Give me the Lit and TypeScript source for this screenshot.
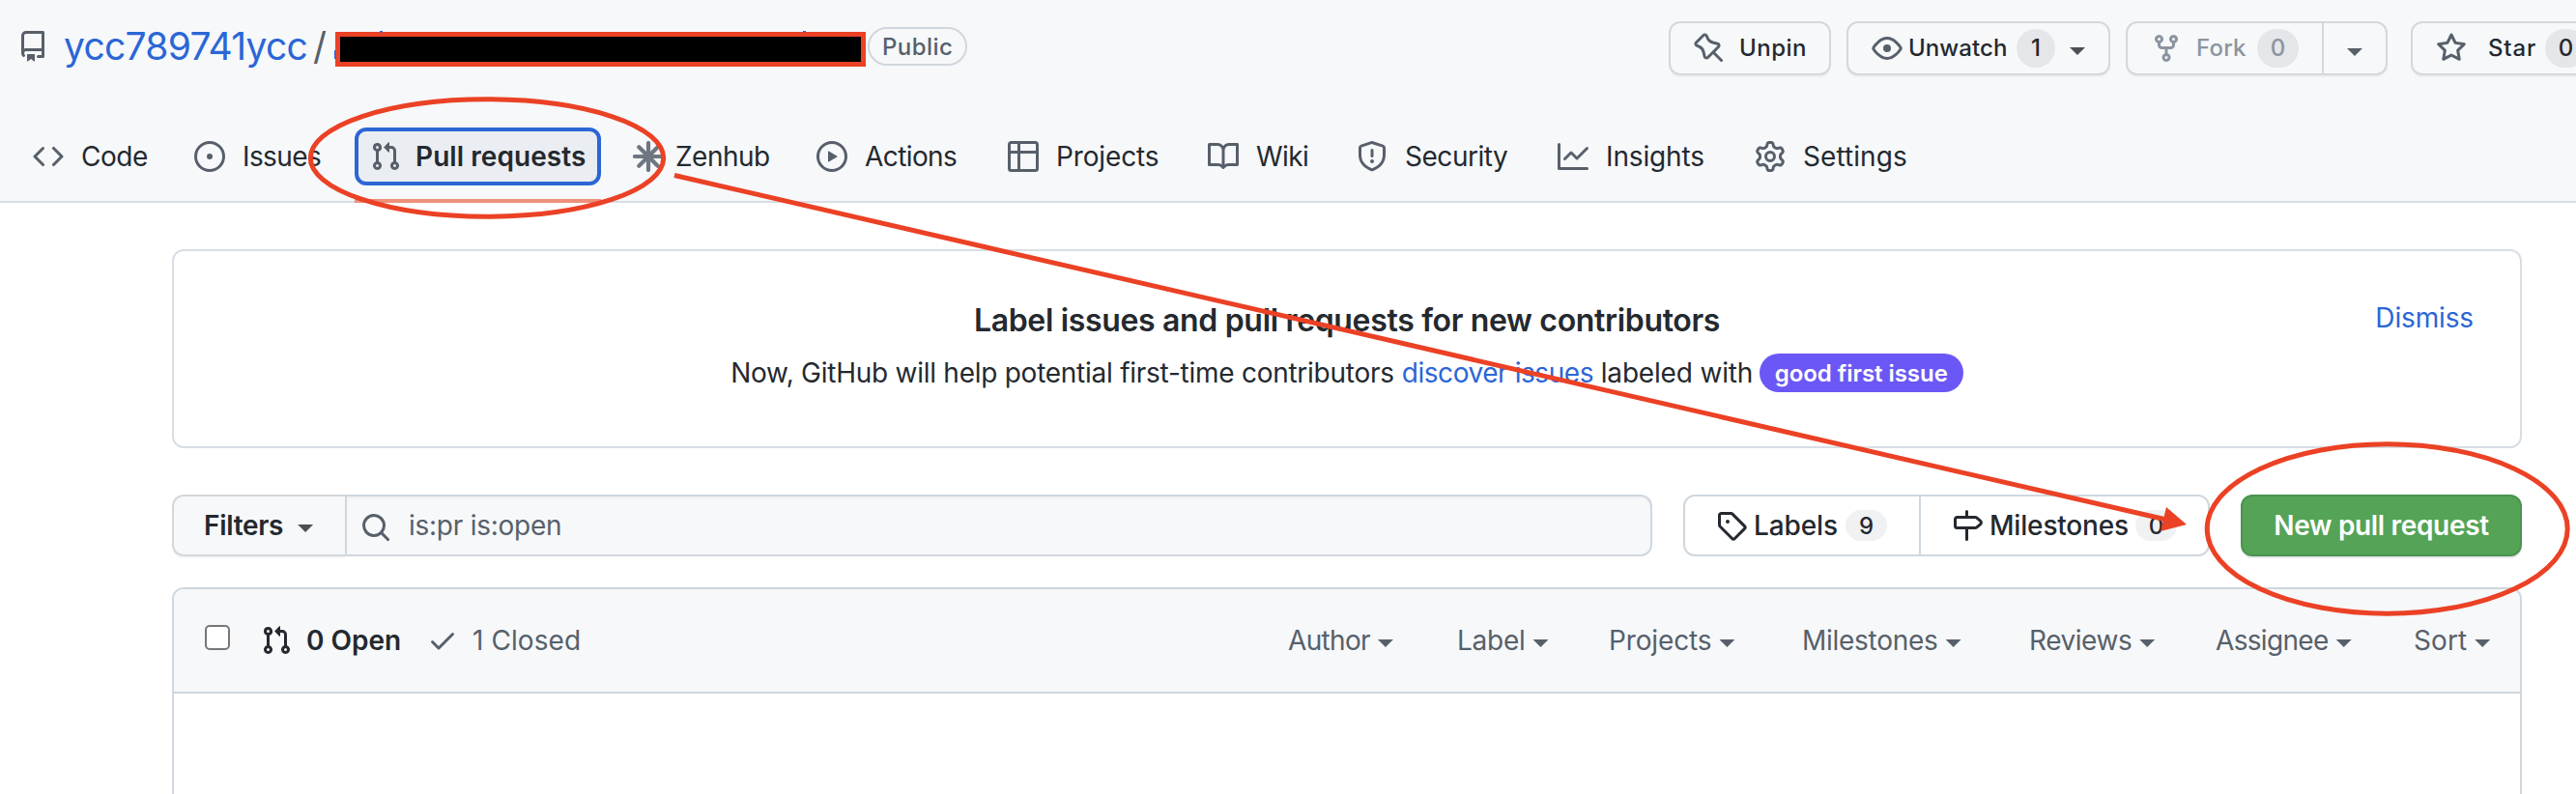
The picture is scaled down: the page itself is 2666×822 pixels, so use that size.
import { LitElement, html, css, svg } from 'lit';
import { customElement } from 'lit/decorators.js';

const paths: Record<string, string> = {
  repo: 'M2 2.5A2.5 2.5 0 014.5 0h8.75a.75.75 0 01.75.75v12.5a.75.75 0 01-.75.75h-2.5a.75.75 0 110-1.5h1.75v-2h-8a1 1 0 00-.714 1.7.75.75 0 01-1.072 1.05A2.495 2.495 0 012 11.5v-9zm10.5-1V9h-8c-.356 0-.694.074-1 .208V2.5a1 1 0 011-1h8zM5 12.25v3.25a.25.25 0 00.4.2l1.45-1.087a.25.25 0 01.3 0L8.6 15.7a.25.25 0 00.4-.2v-3.25a.25.25 0 00-.25-.25h-3.5a.25.25 0 00-.25.25z',
  code: 'M4.72 3.22a.75.75 0 011.06 1.06L2.06 8l3.72 3.72a.75.75 0 11-1.06 1.06L.47 8.53a.75.75 0 010-1.06l4.25-4.25zm6.56 0a.75.75 0 10-1.06 1.06L13.94 8l-3.72 3.72a.75.75 0 101.06 1.06l4.25-4.25a.75.75 0 000-1.06l-4.25-4.25z',
  issue: 'M8 9.5a1.5 1.5 0 100-3 1.5 1.5 0 000 3zM8 0a8 8 0 100 16A8 8 0 008 0zM1.5 8a6.5 6.5 0 1113 0 6.5 6.5 0 01-13 0z',
  pull: 'M7.177 3.073L9.573.677A.25.25 0 0110 .854v4.792a.25.25 0 01-.427.177L7.177 3.427a.25.25 0 010-.354zM3.75 2.5a.75.75 0 100 1.5.75.75 0 000-1.5zm-2.25.75a2.25 2.25 0 113 2.122v5.256a2.251 2.251 0 11-1.5 0V5.372A2.25 2.25 0 011.5 3.25zM11 2.5h-1V4h1a1 1 0 011 1v5.628a2.251 2.251 0 101.5 0V5A2.5 2.5 0 0011 2.5zm1 10.25a.75.75 0 111.5 0 .75.75 0 01-1.5 0zM3.75 12a.75.75 0 100 1.5.75.75 0 000-1.5z',
  play: 'M1.5 8a6.5 6.5 0 1113 0 6.5 6.5 0 01-13 0zM8 0a8 8 0 100 16A8 8 0 008 0zM6.379 5.227A.25.25 0 006 5.442v5.117a.25.25 0 00.379.214l4.264-2.559a.25.25 0 000-.428L6.379 5.227z',
  table: 'M1.75 0h12.5C15.216 0 16 .784 16 1.75v12.5A1.75 1.75 0 0114.25 16H1.75A1.75 1.75 0 010 14.25V1.75C0 .784.784 0 1.75 0zM1.5 6.5v7.75c0 .138.112.25.25.25H5v-8H1.5zm5 0v8h7.75a.25.25 0 00.25-.25V6.5h-8zm8-1.5V1.75a.25.25 0 00-.25-.25H6.5V5h8zM5 5V1.5H1.75a.25.25 0 00-.25.25V5H5z',
  book: 'M0 1.75A.75.75 0 01.75 1h4.253c1.227 0 2.317.59 3 1.501A3.744 3.744 0 0111.006 1h4.245a.75.75 0 01.75.75v10.5a.75.75 0 01-.75.75h-4.507a2.25 2.25 0 00-1.591.659l-.622.621a.75.75 0 01-1.06 0l-.622-.621A2.25 2.25 0 005.258 13H.75a.75.75 0 01-.75-.75V1.75zm8.755 3a2.25 2.25 0 012.25-2.25H14.5v9h-3.757c-.71 0-1.4.201-1.992.572l.004-7.322zm-1.504 7.324l.004-5.073-.002-2.253A2.25 2.25 0 005.003 2.5H1.5v9h3.757a3.75 3.75 0 011.994.574z',
  shield: 'M7.467.133a1.75 1.75 0 011.066 0l5.25 1.68A1.75 1.75 0 0115 3.48V7c0 1.566-.32 3.182-1.303 4.682-.983 1.498-2.585 2.813-5.032 3.855a1.7 1.7 0 01-1.33 0c-2.447-1.042-4.049-2.357-5.032-3.855C1.32 10.182 1 8.566 1 7V3.48a1.75 1.75 0 011.217-1.667l5.25-1.68zm.61 1.429a.25.25 0 00-.153 0l-5.25 1.68a.25.25 0 00-.174.238V7c0 1.358.275 2.666 1.057 3.86.784 1.194 2.121 2.34 4.366 3.297a.2.2 0 00.154 0c2.245-.956 3.582-2.104 4.366-3.298C13.225 9.666 13.5 8.36 13.5 7V3.48a.25.25 0 00-.174-.237l-5.25-1.68zM9 10.5a1 1 0 11-2 0 1 1 0 012 0zm-.25-5.75a.75.75 0 10-1.5 0v3a.75.75 0 001.5 0v-3z',
  graph: 'M1.5 1.75a.75.75 0 00-1.5 0v12.5c0 .414.336.75.75.75h14.5a.75.75 0 000-1.5H1.5V1.75zm14.28 2.53a.75.75 0 00-1.06-1.06L10 7.94 7.53 5.47a.75.75 0 00-1.06 0L3.22 8.72a.75.75 0 001.06 1.06L7 7.06l2.47 2.47a.75.75 0 001.06 0l5.25-5.25z',
  gear: 'M7.429 1.525a6.593 6.593 0 011.142 0c.036.003.108.036.137.146l.289 1.105c.147.56.55.967.997 1.189.174.086.341.183.501.29.417.278.97.423 1.53.27l1.102-.303c.11-.03.175.016.195.046.219.31.41.641.573.989.014.031.022.11-.059.19l-.815.806c-.411.406-.562.957-.53 1.456a4.588 4.588 0 010 .582c-.032.499.119 1.05.53 1.456l.815.806c.08.08.073.159.059.19a6.494 6.494 0 01-.573.99c-.02.029-.086.074-.195.045l-1.103-.303c-.559-.153-1.112-.008-1.529.27-.16.107-.327.204-.5.29-.449.222-.851.628-.998 1.189l-.289 1.105c-.029.11-.101.143-.137.146a6.613 6.613 0 01-1.142 0c-.036-.003-.108-.037-.137-.146l-.289-1.105c-.147-.56-.55-.967-.997-1.189a4.502 4.502 0 01-.501-.29c-.417-.278-.97-.423-1.53-.27l-1.102.303c-.11.03-.175-.016-.195-.046a6.492 6.492 0 01-.573-.989c-.014-.031-.022-.11.059-.19l.815-.806c.411-.406.562-.957.53-1.456a4.587 4.587 0 010-.582c.032-.499-.119-1.05-.53-1.456l-.815-.806c-.08-.08-.073-.159-.059-.19a6.44 6.44 0 01.573-.99c.02-.029.086-.075.195-.045l1.103.303c.559.153 1.112.008 1.529-.27.16-.107.327-.204.5-.29.449-.222.851-.628.998-1.189l.289-1.105c.029-.11.101-.143.137-.146zM8 0c-.236 0-.47.01-.701.03-.743.065-1.29.615-1.458 1.261l-.29 1.106c-.017.066-.078.158-.211.224a5.994 5.994 0 00-.668.386c-.123.082-.233.09-.3.071L3.27 2.776c-.644-.177-1.392.02-1.82.63a7.977 7.977 0 00-.704 1.217c-.315.675-.111 1.422.363 1.891l.815.806c.05.048.098.147.088.294a6.084 6.084 0 000 .772c.01.147-.038.246-.088.294l-.815.806c-.474.469-.678 1.216-.363 1.891.2.428.436.835.704 1.218.428.609 1.176.806 1.82.63l1.103-.303c.066-.019.176-.011.299.071.213.143.436.272.668.386.133.066.194.158.212.224l.289 1.106c.169.646.715 1.196 1.458 1.26a8.094 8.094 0 001.402 0c.743-.064 1.29-.614 1.458-1.26l.29-1.106c.017-.066.078-.158.211-.224a5.98 5.98 0 00.668-.386c.123-.082.233-.09.3-.071l1.102.302c.644.177 1.392-.02 1.82-.63.268-.382.505-.789.704-1.217.315-.675.111-1.422-.364-1.891l-.814-.806c-.05-.048-.098-.147-.088-.294a6.1 6.1 0 000-.772c-.01-.147.039-.246.088-.294l.814-.806c.475-.469.679-1.216.364-1.891a7.992 7.992 0 00-.704-1.218c-.428-.609-1.176-.806-1.82-.63l-1.103.303c-.066.019-.176.011-.299-.071a5.991 5.991 0 00-.668-.386c-.133-.066-.194-.158-.212-.224L10.16 1.29C9.99.645 9.444.095 8.701.031A8.094 8.094 0 008 0zm1.5 8a1.5 1.5 0 11-3 0 1.5 1.5 0 013 0zM11 8a3 3 0 11-6 0 3 3 0 016 0z',
  eye: 'M1.679 7.932c.412-.621 1.242-1.75 2.366-2.717C5.175 4.242 6.527 3.5 8 3.5c1.473 0 2.824.742 3.955 1.715 1.124.967 1.954 2.096 2.366 2.717a.119.119 0 010 .136c-.412.621-1.242 1.75-2.366 2.717C10.825 11.758 9.473 12.5 8 12.5c-1.473 0-2.824-.742-3.955-1.715C2.92 9.818 2.09 8.69 1.679 8.068a.119.119 0 010-.136zM8 2c-1.981 0-3.67.992-4.933 2.078C1.797 5.169.88 6.423.43 7.1a1.619 1.619 0 000 1.798c.45.678 1.367 1.932 2.637 3.024C4.329 13.008 6.019 14 8 14c1.981 0 3.67-.992 4.933-2.078 1.27-1.091 2.187-2.345 2.637-3.023a1.619 1.619 0 000-1.798c-.45-.678-1.367-1.932-2.637-3.023C11.671 2.992 9.981 2 8 2zm0 8a2 2 0 100-4 2 2 0 000 4z',
  pin: 'M4.456.734a1.75 1.75 0 012.826.504l.613 1.327a3.081 3.081 0 002.084 1.707l2.454.584c1.332.317 1.8 1.972.832 2.94L11.06 10l3.72 3.72a.75.75 0 11-1.061 1.06L10 11.06l-2.204 2.205c-.968.968-2.623.5-2.94-.832l-.584-2.454a3.081 3.081 0 00-1.707-2.084l-1.327-.613a1.75 1.75 0 01-.504-2.826L4.456.734zM5.92 1.866a.25.25 0 00-.404-.072L1.794 5.516a.25.25 0 00.072.404l1.328.613A4.582 4.582 0 015.73 9.63l.584 2.454a.25.25 0 00.42.12l5.47-5.47a.25.25 0 00-.12-.42L9.63 5.73a4.581 4.581 0 01-3.098-2.537L5.92 1.866z',
  fork: 'M5 3.25a.75.75 0 11-1.5 0 .75.75 0 011.5 0zm0 2.122a2.25 2.25 0 10-1.5 0v.878A2.25 2.25 0 005.75 8.5h1.5v2.128a2.251 2.251 0 101.5 0V8.5h1.5a2.25 2.25 0 002.25-2.25v-.878a2.25 2.25 0 10-1.5 0v.878a.75.75 0 01-.75.75h-4.5A.75.75 0 015 6.25v-.878zm3.75 7.378a.75.75 0 11-1.5 0 .75.75 0 011.5 0zm3-8.75a.75.75 0 100-1.5.75.75 0 000 1.5z',
  star: 'M8 .25a.75.75 0 01.673.418l1.882 3.815 4.21.612a.75.75 0 01.416 1.279l-3.046 2.97.719 4.192a.75.75 0 01-1.088.791L8 12.347l-3.766 1.98a.75.75 0 01-1.088-.79l.72-4.194L.818 6.374a.75.75 0 01.416-1.28l4.21-.611L7.327.668A.75.75 0 018 .25zm0 2.445L6.615 5.5a.75.75 0 01-.564.41l-3.097.45 2.24 2.184a.75.75 0 01.216.664l-.528 3.084 2.769-1.456a.75.75 0 01.698 0l2.77 1.456-.53-3.084a.75.75 0 01.216-.664l2.24-2.183-3.096-.45a.75.75 0 01-.564-.41L8 2.694z',
  search: 'M10.68 11.74a6 6 0 01-7.922-8.982 6 6 0 018.982 7.922l3.04 3.04a.75.75 0 11-1.06 1.06l-3.04-3.04zM11.5 7a4.499 4.499 0 10-8.998 0A4.499 4.499 0 0011.5 7z',
  tag: 'M2.5 7.775V2.75a.25.25 0 01.25-.25h5.025a.25.25 0 01.177.073l6.25 6.25a.25.25 0 010 .354l-5.025 5.025a.25.25 0 01-.354 0l-6.25-6.25a.25.25 0 01-.073-.177zm-1.5 0V2.75C1 1.784 1.784 1 2.75 1h5.025c.464 0 .91.184 1.238.513l6.25 6.25a1.75 1.75 0 010 2.474l-5.026 5.026a1.75 1.75 0 01-2.474 0l-6.25-6.25A1.75 1.75 0 011 7.775zM6 5a1 1 0 100 2 1 1 0 000-2z',
  milestone: 'M7.75 0a.75.75 0 01.75.75V3h3.634c.414 0 .814.147 1.13.414l2.07 1.75a1.75 1.75 0 010 2.672l-2.07 1.75a1.75 1.75 0 01-1.13.414H8.5v5.25a.75.75 0 11-1.5 0V10H2.75A1.75 1.75 0 011 8.25v-3.5C1 3.784 1.784 3 2.75 3H7V.75A.75.75 0 017.75 0zm0 8.5h4.384a.25.25 0 00.161-.06l2.07-1.75a.25.25 0 000-.38l-2.07-1.75a.25.25 0 00-.161-.06H2.75a.25.25 0 00-.25.25v3.5c0 .138.112.25.25.25h5z',
  check: 'M13.78 4.22a.75.75 0 010 1.06l-7.25 7.25a.75.75 0 01-1.06 0L2.22 9.28a.75.75 0 011.06-1.06L6 10.94l6.72-6.72a.75.75 0 011.06 0z',
};

const icon = (name: string) =>
  html`<svg class="icon" viewBox="0 0 16 16" aria-hidden="true">${svg`<path fill-rule="evenodd" d=${paths[name]} />`}</svg>`;

const asterisk = html`<svg class="icon aster" viewBox="0 0 32 32" aria-hidden="true">
  <path d="M2 16H30M16 2V30M6.3 6.3L25.7 25.7M25.7 6.3L6.3 25.7" stroke="#6e7781" stroke-width="4.2" stroke-linecap="round" />
</svg>`;

const tabs: [string, string, string][] = [
  ['code', 'Code', 'a'],
  ['issue', 'Issues', 'b'],
  ['pull', 'Pull requests', 'current'],
  ['', 'Zenhub', 'zen'],
  ['play', 'Actions', 'b'],
  ['table', 'Projects', 'c'],
  ['book', 'Wiki', 'b'],
  ['shield', 'Security', 'a'],
  ['graph', 'Insights', 'c'],
  ['gear', 'Settings', 'd'],
];

const menus: [string, string][] = [
  ['Author', 'e'],
  ['Label', 'f'],
  ['Projects', 'c'],
  ['Milestones', 'f'],
  ['Reviews', 'a'],
  ['Assignee', 'e'],
  ['Sort', 'd'],
];

@customElement('app-root')
export class AppRoot extends LitElement {
  static styles = css`
    :host {
      display: flex;
      flex-direction: column;
      position: relative;
      height: 822px;
      overflow: hidden;
      background: #fff;
      color: #24292f;
      font: 400 28px/40px Inter, 'Liberation Sans', sans-serif;
      white-space: nowrap;
    }
    * { box-sizing: border-box; }
    .icon { width: 32px; height: 32px; flex: none; fill: currentColor; display: block; }
    .caret {
      flex: none;
      width: 16px;
      height: 8px;
      background: currentColor;
      clip-path: polygon(0 0, 100% 0, 50% 100%);
    }
    .header { height: 210px; flex: none; background: #f6f8fa; border-bottom: 2px solid #d8dee4; }
    .top { display: flex; align-items: center; height: 100px; padding-left: 18px; }
    .title { display: flex; align-items: center; height: 60px; margin-bottom: 4px; color: #57606a; flex: none; }
    .owner { margin-left: 16px; width: 258px; font-size: 39px; letter-spacing: -0.72px; color: #2b66d6; }
    .slash { width: 23px; font-size: 39px; }
    .redacted { width: 549px; height: 36px; margin-top: 6px; border: 5px solid #eb4125; background: #000; }
    .badge {
      width: 103px;
      height: 40px;
      margin-left: 2px;
      border: 2px solid #d0d7de;
      border-radius: 20px;
      padding-left: 13px;
      font-size: 24px;
      font-weight: 500;
      line-height: 37px;
      letter-spacing: 0.45px;
    }
    .actions { display: flex; gap: 16px; margin-left: 726px; flex: none; }
    .btn {
      display: flex;
      align-items: center;
      height: 56px;
      padding-left: 24px;
      border: 2px solid #d5d8da;
      border-radius: 12px;
      background: #f6f8fa;
      box-shadow: 0 2px 0 rgba(27, 31, 36, 0.04);
      font-size: 24px;
      font-weight: 500;
      flex: none;
    }
    .btn .icon { color: #57606a; }
    .btn .caret { margin-top: 6px; color: #4b5056; }
    .count {
      display: flex;
      justify-content: center;
      align-items: center;
      width: 43px;
      height: 40px;
      border-radius: 20px;
      background: #e4e6e9;
      flex: none;
    }
    .unpin { width: 168px; gap: 15px; letter-spacing: 0.48px; }
    .watch { width: 273px; }
    .watch .label { width: 112px; margin-left: 6px; letter-spacing: 0.08px; }
    .watch .count { width: 40px; margin-right: 15px; }
    .fork { width: 271px; color: #8c959f; }
    .fork .icon { color: #8c959f; }
    .fork .label { width: 63px; margin-left: 15px; letter-spacing: 0.19px; }
    .fork .drop {
      display: flex;
      align-items: center;
      height: 52px;
      margin-left: 24px;
      padding-left: 24px;
      border-left: 2px solid #d5d8da;
    }
    .fork .caret { color: #57606a; margin-top: 8px; }
    .starred { width: 220px; margin-left: 8px; }
    .starred .label { width: 59px; margin-left: 22px; letter-spacing: 0.86px; }

    .tabs {
      display: grid;
      grid-template-columns: 167px 166px 288px 190px 198px 207px 154px 208px 204px 200px;
      height: 108px;
      padding: 16px 0 0 34px;
    }
    .tab { display: flex; align-items: center; gap: 18px; position: relative; }
    .tab .icon { color: #57606a; }
    .a { letter-spacing: -0.46px; }
    .b { letter-spacing: -0.59px; }
    .c { letter-spacing: -0.14px; }
    .d { letter-spacing: 0.08px; }
    .e { letter-spacing: -0.67px; }
    .f { letter-spacing: -0.27px; }
    .zen { gap: 12px; letter-spacing: -0.52px; }
    .current {
      width: 255px;
      height: 60px;
      align-self: center;
      padding-left: 12px;
      gap: 15px;
      border: 4px solid #2c66d5;
      border-radius: 12px;
      background: #eaedf1;
      font-weight: 600;
      letter-spacing: 0.07px;
    }
    .current::after {
      content: '';
      position: absolute;
      left: -4px;
      right: -4px;
      bottom: -22px;
      height: 4px;
      background: #ee917b;
    }

    .content { display: flex; flex-direction: column; flex: 1; min-height: 0; padding: 48px 56px 0 178px; }
    .banner {
      display: grid;
      grid-template-columns: 1fr;
      position: relative;
      height: 206px;
      flex: none;
      padding-top: 52px;
      align-content: start;
      justify-items: center;
      border: 2px solid #d8dee4;
      border-radius: 12px;
    }
    .banner h3 { margin: 0; font-size: 32px; font-weight: 600; line-height: 40px; letter-spacing: -0.33px; }
    .banner p { display: flex; align-items: center; height: 40px; margin: 14px 0 0; letter-spacing: -0.26px; }
    .banner a { color: #2b66d6; }
    .discover { width: 206px; margin-left: 8px; letter-spacing: -0.44px; }
    .with { width: 164px; letter-spacing: -0.18px; }
    .pill {
      width: 211px;
      height: 40px;
      border-radius: 20px;
      background: #6b57f5;
      color: #fff;
      font-size: 24px;
      font-weight: 600;
      line-height: 42px;
      letter-spacing: -0.04px;
      text-align: center;
    }
    .dismiss { position: absolute; right: 48px; top: 49px; letter-spacing: -0.14px; }

    .toolbar { display: flex; height: 64px; margin-top: 48px; flex: none; font-weight: 500; }
    .filters {
      display: flex;
      align-items: center;
      width: 179px;
      padding-left: 31px;
      border: 2px solid #d5d8da;
      border-right: 0;
      border-radius: 12px 0 0 12px;
      background: #f6f8fa;
      box-shadow: 0 2px 0 rgba(27, 31, 36, 0.04);
      font-weight: 600;
      letter-spacing: -0.3px;
    }
    .filters .caret { margin: 6px 0 0 15px; color: #4b5056; }
    .search {
      display: flex;
      align-items: center;
      gap: 18px;
      width: 1353px;
      padding-left: 14px;
      border: 2px solid #d0d7de;
      border-radius: 0 12px 12px 0;
      background: #f6f8fa;
      box-shadow: inset 0 2px 0 rgba(208, 215, 222, 0.2);
      color: #57606a;
      font-weight: 400;
      letter-spacing: -0.26px;
    }
    .search .icon { margin-top: 3px; }
    .subnav { display: flex; width: 545px; margin-left: 32px; border: 2px solid #d0d7de; border-radius: 12px; }
    .subnav div { display: flex; align-items: center; padding-left: 32px; }
    .subnav .labels { width: 244px; border-right: 2px solid #d0d7de; letter-spacing: -0.11px; }
    .subnav .miles { letter-spacing: -0.18px; }
    .labels b, .miles b { font-weight: 500; margin-left: 7px; }
    .labels b { width: 95px; }
    .miles b { width: 151px; }
    .subnav .count { height: 32px; background: #eff1f3; font-size: 24px; padding-top: 2px; }
    .create {
      display: flex;
      justify-content: center;
      align-items: center;
      width: 291px;
      margin-left: auto;
      border: 2px solid #4b934f;
      border-radius: 12px;
      background: #54a357;
      box-shadow: 0 2px 0 rgba(27, 31, 36, 0.1);
      color: #fff;
      font-weight: 600;
      letter-spacing: -0.33px;
    }

    .list {
      flex: 1;
      margin-top: 32px;
      border: 2px solid #d0d7de;
      border-bottom: 0;
      border-radius: 12px 12px 0 0;
    }
    .list-head {
      display: flex;
      align-items: center;
      height: 108px;
      padding-left: 32px;
      border-bottom: 2px solid #d0d7de;
      border-radius: 10px 10px 0 0;
      background: #f6f8fa;
      color: #57606a;
    }
    .box { width: 26px; height: 26px; margin: 0 32px 6px 0; border: 2px solid #767676; border-radius: 5px; background: #fff; }
    .open { display: flex; gap: 15px; width: 172px; color: #24292f; font-weight: 600; }
    .closed { display: flex; gap: 15px; width: 891px; letter-spacing: 0.09px; }
    .open .icon, .closed .icon { margin-top: 4px; }
    .menus { display: grid; grid-template-columns: 175px 157px 200px 235px 193px 205px 90px; }
    .menu { display: flex; align-items: center; gap: 8px; }
    .menu .caret { margin-top: 6px; }

    .marks { position: absolute; left: 0; top: 0; width: 2666px; height: 822px; }
  `;

  render() {
    return html`
      <header class="header">
        <div class="top">
          <div class="title">
            ${icon('repo')}
            <span class="owner">ycc789741ycc</span><span class="slash">/</span>
            <span class="redacted"></span><span class="badge">Public</span>
          </div>
          <div class="actions">
            <div class="btn unpin">${icon('pin')}<span>Unpin</span></div>
            <div class="btn watch">
              ${icon('eye')}<span class="label">Unwatch</span><span class="count">1</span><i class="caret"></i>
            </div>
            <div class="btn fork">
              ${icon('fork')}<span class="label">Fork</span><span class="count">0</span>
              <span class="drop"><i class="caret"></i></span>
            </div>
            <div class="btn starred">${icon('star')}<span class="label">Star</span><span class="count">0</span></div>
          </div>
        </div>
        <nav class="tabs">
          ${tabs.map(([i, t, c]) => html`<div class="tab ${c}">${i ? icon(i) : asterisk}<span>${t}</span></div>`)}
        </nav>
      </header>
      <main class="content">
        <section class="banner">
          <h3>Label issues and pull requests for new contributors</h3>
          <p>
            <span>Now, GitHub will help potential first-time contributors</span>
            <a class="discover">discover issues</a><span class="with">labeled with</span>
            <span class="pill">good first issue</span>
          </p>
          <a class="dismiss">Dismiss</a>
        </section>
        <div class="toolbar">
          <div class="filters">Filters<i class="caret"></i></div>
          <div class="search">${icon('search')}<span>is:pr is:open</span></div>
          <div class="subnav">
            <div class="labels">${icon('tag')}<b>Labels</b><span class="count">9</span></div>
            <div class="miles">${icon('milestone')}<b>Milestones</b><span class="count">0</span></div>
          </div>
          <div class="create">New pull request</div>
        </div>
        <section class="list">
          <div class="list-head">
            <span class="box"></span>
            <span class="open">${icon('pull')}0 Open</span>
            <span class="closed">${icon('check')}1 Closed</span>
            <div class="menus">
              ${menus.map(([t, c]) => html`<span class="menu ${c}">${t}<i class="caret"></i></span>`)}
            </div>
          </div>
        </section>
      </main>
      <svg class="marks" viewBox="0 0 2666 822" fill="none" stroke="#eb4125" stroke-width="5">
        <g fill="#2b66d6" stroke="none">
          <rect x="393" y="32" width="3" height="1.5" />
          <rect x="831" y="32" width="3" height="1.5" />
          <rect x="346" y="52" width="1.5" height="9" />
        </g>
        <ellipse cx="504" cy="163.5" rx="182.7" ry="60.7" />
        <ellipse cx="2470.7" cy="547.5" rx="186.5" ry="87.7" />
        <path d="M698 181.5L2240 537.5" />
        <path d="M2242 525L2263 543L2236 550Z" fill="#eb4125" stroke="none" />
      </svg>
    `;
  }
}
